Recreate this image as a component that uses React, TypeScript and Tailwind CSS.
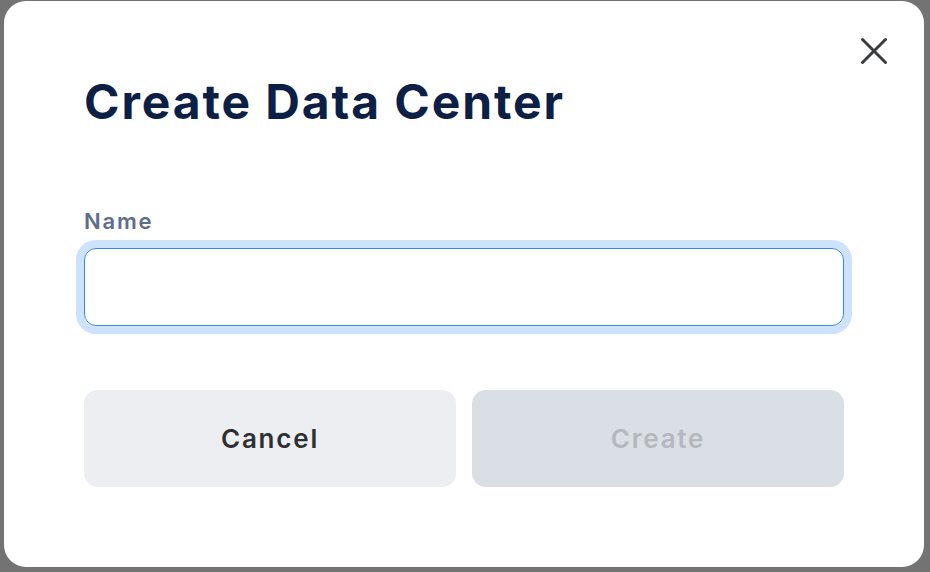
import React from 'react';

const font = { fontFamily: 'Inter, "Noto Sans", sans-serif' };

function CloseIcon() {
    return (
        <svg width="28" height="28" viewBox="0 0 28 28" fill="none" stroke="#3a3b3d" strokeWidth="3" strokeLinecap="round">
            <path d="M2.5 2.5 L25.5 25.5" />
            <path d="M25.5 2.5 L2.5 25.5" />
        </svg>
    );
}

export default function App() {
    return (
        <div className="w-[930px] h-[572px] bg-[#737373] pt-[1px] pl-[4px]" style={font}>
            <div className="relative w-[920px] h-[566px] rounded-[22px] bg-white px-[80px] pt-[77px]">
                <button className="absolute top-[36px] right-[36px] p-0 text-[#3a3b3d]">
                    <CloseIcon />
                </button>

                <h2 className="text-[48px] leading-[48px] font-bold text-[#0e1f45] tracking-[1.9px]">Create Data Center</h2>

                <label className="block mt-[85px] text-[22px] leading-[20px] font-semibold text-[#5d6d8d] tracking-[1.8px]">Name</label>
                <input
                    className="block mt-[17px] w-[760px] h-[78px] rounded-[12px] border-[1.5px] border-[#3a86ee] ring-8 ring-[#cde2fb] outline-none px-4 text-[20px]"
                    autoFocus
                />

                <div className="mt-[64px] flex gap-4">
                    <button className="w-[372px] h-[97px] rounded-[14px] bg-[#edeef2] text-[26px] font-semibold text-[#2e2f31] tracking-[1.8px]">
                        Cancel
                    </button>
                    <button disabled className="w-[372px] h-[97px] rounded-[14px] bg-[#d9dfe5] text-[26px] font-semibold text-[#b4b8bc] tracking-[1.8px]">
                        Create
                    </button>
                </div>
            </div>
        </div>
    );
}
